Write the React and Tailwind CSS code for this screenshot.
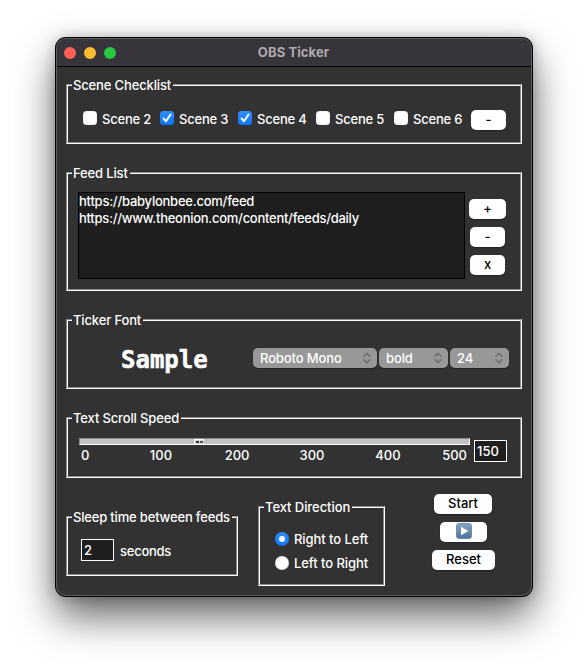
import React from "react";

function Frame({ title, className, children, legend = "tracking-[-0.14px]" }) {
  return (
    <section className={`relative border border-t-[#8b8b8b] border-l-[#8b8b8b] border-b-white border-r-white ${className}`}>
      <div className="h-full border border-t-white border-l-white border-b-[#8b8b8b] border-r-[#8b8b8b]">{children}</div>
      <h2 className={`absolute -top-2 left-[5px] bg-[#323232] pr-0.5 pl-px leading-4 whitespace-nowrap ${legend}`}>{title}</h2>
    </section>
  );
}

function Button({ children, className }) {
  return (
    <button className={`flex h-5 items-center justify-center rounded-[5px] bg-white pb-0.5 leading-[18px] text-black shadow-[0_1px_1px_rgba(0,0,0,0.35)] ${className}`}>
      {children}
    </button>
  );
}

function Check({ label, checked, className }) {
  return (
    <label className={`flex items-center ${className}`}>
      <span className={`relative -top-0.5 flex size-3.5 items-center justify-center rounded-[3.5px] ${checked ? "bg-linear-to-b from-[#2f8fff] to-[#0a75fa]" : "bg-white shadow-[inset_0_0_1px_#777]"}`}>
        {checked && (
          <svg viewBox="0 0 14 14" className="size-3.5" fill="none" stroke="white" strokeWidth="2" strokeLinecap="round" strokeLinejoin="round">
            <path d="M3.6 7.5 6 10.3 10.4 3.7" />
          </svg>
        )}
      </span>
      <span className="ml-[5px] tracking-[-0.22px] whitespace-nowrap">{label}</span>
    </label>
  );
}

function Radio({ label, checked }) {
  return (
    <label className="flex h-6 items-center">
      <span className={`flex size-3.5 items-center justify-center rounded-full ${checked ? "bg-linear-to-b from-[#2f8fff] to-[#0a75fa]" : "bg-white shadow-[inset_0_0_1px_#777]"}`}>
        {checked && <span className="size-1.5 rounded-full bg-white" />}
      </span>
      <span className="ml-[5px] pt-px tracking-[-0.06px] whitespace-nowrap">{label}</span>
    </label>
  );
}

function Select({ value, className }) {
  return (
    <div className={`flex h-5 items-center justify-between rounded-[5px] bg-[#989898] pr-[5px] pl-[7px] leading-5 shadow-[0_1px_1px_rgba(0,0,0,0.3)] ${className}`}>
      <span className="tracking-[-0.12px] whitespace-nowrap">{value}</span>
      <svg viewBox="0 0 10 12" className="h-3 w-2.5" fill="none" stroke="#6c6c6c" strokeWidth="1.5" strokeLinecap="round" strokeLinejoin="round">
        <path d="M2 4.2 5 1.2 8 4.2M2 7.8 5 10.8 8 7.8" />
      </svg>
    </div>
  );
}

export default function App() {
  return (
    <div className="h-[670px] w-[588px] overflow-hidden bg-white pt-[38px] pl-14 font-[Inter,sans-serif] text-[13px] font-medium text-white">
      <main className="flex h-[558px] w-[476px] flex-col rounded-[10px] bg-[#323232] shadow-[inset_0_0_0_1px_#5c5c5c,0_0_0_1px_#000,0_20px_40px_rgba(0,0,0,0.62),0_0_14px_rgba(0,0,0,0.25)]">
        <header className="mx-px mt-px flex h-7 shrink-0 items-center rounded-t-[9px] border-b border-black bg-[#38343c] pl-[7px]">
          <div className="flex gap-2">
            <span className="size-3 rounded-full bg-[#ff5f57]" />
            <span className="size-3 rounded-full bg-[#febc2e]" />
            <span className="size-3 rounded-full bg-[#28c840]" />
          </div>
          <h1 className="w-[348px] pl-[7px] text-center font-bold tracking-[0.1px] text-[#adaaae]">OBS Ticker</h1>
        </header>

        <div className="px-2.5 pt-[17px]">
          <Frame title="Scene Checklist" className="h-[60px]">
            <div className="flex h-full items-center pt-3 pl-[15px]">
              <Check label="Scene 2" className="w-[77px]" />
              <Check label="Scene 3" checked className="w-[78px]" />
              <Check label="Scene 4" checked className="w-[78px]" />
              <Check label="Scene 5" className="w-[78px]" />
              <Check label="Scene 6" className="w-[77px]" />
              <Button className="w-[35px]">-</Button>
            </div>
          </Frame>

          <Frame title="Feed List" className="mt-7 h-[119px]">
            <div className="flex pt-[18px] pl-2.5">
              <div className="h-[87px] w-[387px] border border-black bg-[#1e1e1e] leading-[17px]">
                <p className="tracking-[-0.24px]">https://babylonbee.com/feed</p>
                <p className="tracking-[-0.27px]">https://www.theonion.com/content/feeds/daily</p>
              </div>
              <div className="ml-1 flex flex-col items-center gap-2 pt-[7px]">
                <Button className="w-[37px]">+</Button>
                <Button className="w-[35px]">-</Button>
                <Button className="w-[35px]">x</Button>
              </div>
            </div>
          </Frame>

          <Frame title="Ticker Font" className="mt-7 h-[70px]">
            <div className="flex pt-[27px]">
              <div className="w-[185px] pt-px pl-[53px] font-['DejaVu_Sans_Mono',monospace] text-2xl leading-[22px] font-bold [-webkit-text-stroke:0.5px_white]">Sample</div>
              <div className="flex gap-0.5">
                <Select value="Roboto Mono" className="w-[124px]" />
                <Select value="bold" className="w-[69px]" />
                <Select value="24" className="w-[59px]" />
              </div>
            </div>
          </Frame>

          <Frame title="Text Scroll Speed" className="mt-7 h-[61px]">
            <div className="flex pt-[19px] pl-[11px]">
              <div className="w-[391px]">
                <div className="h-[7px] border border-t-[#8b8b8b] border-r-white border-b-white border-l-[#8b8b8b] bg-[#c3c1c3] pl-[114px]">
                  <div className="flex h-[5px] w-2.5 items-center justify-center gap-px border-t border-l border-white bg-[#d8d8d8]">
                    <span className="h-0.5 w-[3px] bg-[#333]" />
                    <span className="h-0.5 w-[3px] bg-[#555]" />
                  </div>
                </div>
                <div className="mt-0.5 flex justify-between pr-[3px] pl-0.5 leading-[17px]">
                  <span className="w-[69px]">0</span>
                  <span className="w-[75px]">100</span>
                  <span className="w-[75px]">200</span>
                  <span className="w-[76px]">300</span>
                  <span className="w-[67px]">400</span>
                  <span>500</span>
                </div>
              </div>
              <div className="mt-0.5 ml-1 h-[22px] w-[33px] border border-white bg-[#1e1e1e] pl-0.5 leading-[21px]">150</div>
            </div>
          </Frame>

          <div className="flex items-start">
            <Frame title="Sleep time between feeds" legend="tracking-[-0.18px]" className="mt-[38px] h-[60px] w-[172px]">
              <div className="flex pt-[21px] pl-[13px]">
                <div className="h-[22px] w-[33px] border border-white bg-[#1e1e1e] pl-0.5 leading-[21px]">2</div>
                <span className="ml-1.5 leading-[25px] tracking-[-0.25px]">seconds</span>
              </div>
            </Frame>
            <Frame title="Text Direction" legend="tracking-[-0.07px]" className="mt-7 ml-5 h-20 w-[127px]">
              <div className="pt-[19px] pl-[15px]">
                <Radio label="Right to Left" checked />
                <Radio label="Left to Right" />
              </div>
            </Frame>
            <div className="ml-[47px] flex flex-col items-center gap-2 pt-4">
              <Button className="mr-px w-[58px]">Start</Button>
              <Button className="w-[47px]">
                <svg viewBox="0 0 16 16" className="size-4">
                  <defs>
                    <linearGradient id="playFace" x1="0" y1="0" x2="0" y2="1">
                      <stop offset="0" stopColor="#86a8c8" />
                      <stop offset="1" stopColor="#4c7098" />
                    </linearGradient>
                  </defs>
                  <rect x="0.4" y="0.4" width="15.2" height="15.2" rx="3" fill="url(#playFace)" stroke="#54789e" strokeWidth="0.8" />
                  <path d="M5 3.8 12.3 8 5 12.2Z" fill="white" />
                </svg>
              </Button>
              <Button className="w-[63px]">Reset</Button>
            </div>
          </div>
        </div>
      </main>
    </div>
  );
}
